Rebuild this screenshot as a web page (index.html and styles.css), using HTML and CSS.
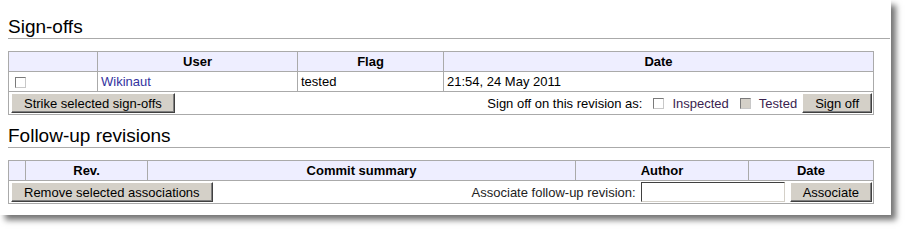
FILE: index.html
```html
<!DOCTYPE html>
<html lang="en">
<head>
  <meta charset="UTF-8">
  <title>Code review</title>
  <link rel="stylesheet" href="styles.css">
</head>
<body>
  <div class="page">
    <h2 class="section-title">Sign-offs</h2>
    <table class="review-table">
      <colgroup>
        <col style="width: 89px">
        <col style="width: 200px">
        <col style="width: 146px">
        <col>
      </colgroup>
      <thead>
        <tr>
          <th></th>
          <th>User</th>
          <th>Flag</th>
          <th>Date</th>
        </tr>
      </thead>
      <tbody>
        <tr>
          <td><input type="checkbox" class="check"></td>
          <td><a href="#" class="user-link">Wikinaut</a></td>
          <td>tested</td>
          <td>21:54, 24 May 2011</td>
        </tr>
        <tr>
          <td colspan="4" class="action-cell">
            <div class="action-row">
              <button type="button" class="btn">Strike selected sign-offs</button>
              <div class="action-form">
                <span>Sign off on this revision as:</span>
                <input type="checkbox" class="check" id="flag-inspected">
                <label for="flag-inspected" class="flag-label">Inspected</label>
                <input type="checkbox" class="check" id="flag-tested" disabled>
                <label for="flag-tested" class="flag-label">Tested</label>
                <button type="button" class="btn">Sign off</button>
              </div>
            </div>
          </td>
        </tr>
      </tbody>
    </table>

    <h2 class="section-title">Follow-up revisions</h2>
    <table class="review-table">
      <colgroup>
        <col style="width: 17px">
        <col style="width: 122px">
        <col style="width: 428px">
        <col style="width: 173px">
        <col>
      </colgroup>
      <thead>
        <tr>
          <th></th>
          <th>Rev.</th>
          <th>Commit summary</th>
          <th>Author</th>
          <th>Date</th>
        </tr>
      </thead>
      <tbody>
        <tr>
          <td colspan="5" class="action-cell">
            <div class="action-row">
              <button type="button" class="btn">Remove selected associations</button>
              <div class="action-form">
                <label for="followup-rev" class="assoc-label">Associate follow-up revision:</label>
                <input type="text" id="followup-rev" class="rev-input">
                <button type="button" class="btn">Associate</button>
              </div>
            </div>
          </td>
        </tr>
      </tbody>
    </table>
  </div>
</body>
</html>
```

FILE: styles.css
```css
html, body {
  height: 100%;
}
body {
  margin: 0;
  padding: 0;
  background-color: white;
  font-family: "Liberation Sans", Arial, sans-serif;
  font-size: 13px;
  color: black;
}
.page {
  width: 891px;
  height: 215px;
  padding: 15px 0 0 8px;
  box-sizing: border-box;
  background-color: white;
  overflow: hidden;
  box-shadow: 5px 5px 6px rgba(0, 0, 0, 0.55);
}
.section-title {
  width: 882px;
  margin: 0 0 12px 0;
  font-size: 19px;
  font-weight: normal;
  line-height: 23px;
  border-bottom: 1px solid #aaa;
}
.review-table {
  width: 866px;
  table-layout: fixed;
  border-collapse: collapse;
  margin-bottom: 9px;
}
.review-table th, .review-table td {
  border: 1px solid #aaa;
  padding: 2px 3px;
  line-height: 15px;
  text-align: left;
  white-space: nowrap;
  overflow: hidden;
}
.review-table th {
  background-color: #eeeeff;
  font-weight: bold;
  text-align: center;
}
.user-link {
  color: #3333a0;
  text-decoration: none;
}
.review-table td.action-cell {
  padding: 1px 1px 1px 2px;
}
.action-row {
  display: flex;
  justify-content: space-between;
  align-items: center;
}
.action-form {
  display: flex;
  align-items: center;
}
.btn {
  height: 20px;
  padding: 0 12px;
  font-family: "Liberation Sans", Arial, sans-serif;
  font-size: 13px;
  color: black;
  background-color: #d4d0c8;
  border: 1px solid;
  border-color: #fff #404040 #404040 #fff;
  box-shadow: inset -1px -1px #808080;
  border-radius: 0;
  cursor: pointer;
}
.check {
  appearance: none;
  width: 11px;
  height: 11px;
  margin: 0 0 0 3px;
  border: 1px solid #7a7a7a;
  border-right-color: #c8c8c8;
  border-bottom-color: #c8c8c8;
  background-color: white;
  vertical-align: middle;
}
.check:disabled {
  background-color: #d4d0c8;
}
.action-form .check {
  margin: 0 8px 0 11px;
}
.flag-label {
  color: #3a2350;
}
.action-form .btn {
  margin-left: 5px;
}
.assoc-label {
  color: #222;
}
.rev-input {
  width: 144px;
  height: 20px;
  margin: 0 0 0 5px;
  padding: 0 2px;
  box-sizing: border-box;
  border: 1px solid;
  border-color: #404040 #d4d0c8 #d4d0c8 #404040;
  background-color: white;
  font-family: "Liberation Sans", Arial, sans-serif;
  font-size: 13px;
}
```
